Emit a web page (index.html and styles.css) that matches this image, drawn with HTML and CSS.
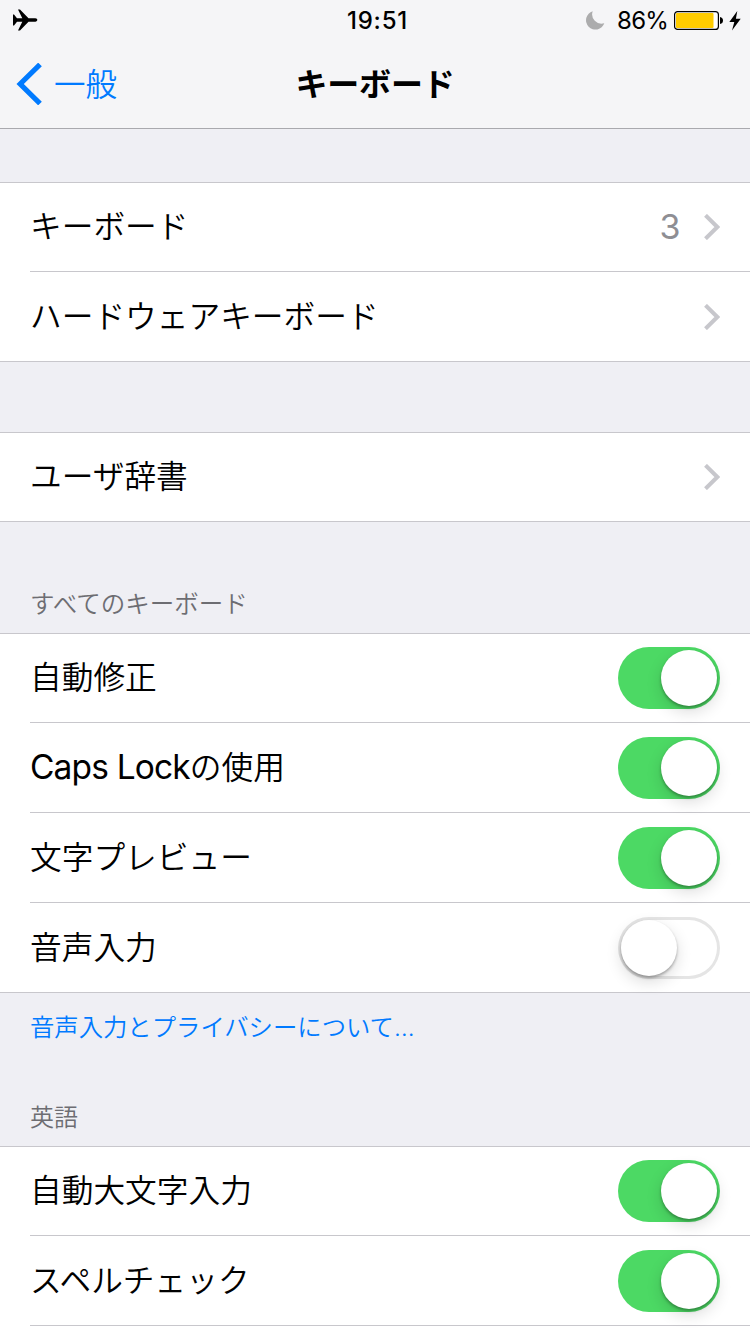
FILE: index.html
```html
<!DOCTYPE html>
<html lang="ja">
<head>
<meta charset="utf-8">
<title>キーボード</title>
<link rel="stylesheet" href="styles.css">
</head>
<body>
<div class="screen">
  <header class="header">
    <div class="status">
      <svg class="plane" width="25" height="24" viewBox="0 0 25 24"><path d="M0 6.500h1l3 3.800h5.300L5 1.500h2L15.500 10.300h6.800c2.700 0 2.700 3.400 0 3.400h-6.800L7 22.500H5l4.300-8.800H4l-3 3.800H0z"/></svg>
      <span class="time">19:51</span>
      <div class="status-right">
        <svg class="moon" width="19" height="19" viewBox="0 0 19 19"><path d="M6.700.2A9.400 9.400 0 1 0 18.300 12.300A9.400 9.400 0 0 1 6.700.2z" fill="#acacad"/></svg>
        <span class="percent">86%</span>
        <svg class="battery" width="50" height="20" viewBox="0 0 50 20"><rect x=".6" y=".6" width="43.800" height="17.800" rx="3" fill="#fff" stroke="#000" stroke-width="1.200"/><rect x="2" y="2" width="37.500" height="15" rx="1" fill="#fc0"/><path d="M46 6q3 .5 3 3.500t-3 3.500z"/></svg>
        <svg class="bolt" width="12" height="20" viewBox="0 0 12 20"><path d="M8.300 0L.3 11h5L3 19.500 11.700 7.800H6.900z"/></svg>
      </div>
    </div>
    <nav class="nav">
      <a class="back"><svg width="26" height="42" viewBox="0 0 26 42"><path d="M24 1.500L4.200 21 24 40.500" fill="none" stroke="#007aff" stroke-width="5.200"/></svg><span class="back-label">一般</span></a>
      <h1 class="title">キーボード</h1>
    </nav>
  </header>

  <section class="group group-first">
    <div class="row"><span class="label">キーボード</span><span class="value">3</span><svg class="chevron" width="16" height="26" viewBox="0 0 16 26"><path d="M1.500 1.300L13.300 13 1.500 24.700"/></svg></div>
    <div class="row"><span class="label">ハードウェアキーボード</span><svg class="chevron" width="16" height="26" viewBox="0 0 16 26"><path d="M1.500 1.300L13.300 13 1.500 24.700"/></svg></div>
  </section>

  <section class="group group-dictionary">
    <div class="row"><span class="label">ユーザ辞書</span><svg class="chevron" width="16" height="26" viewBox="0 0 16 26"><path d="M1.500 1.300L13.300 13 1.500 24.700"/></svg></div>
  </section>

  <h2 class="caption caption-all">すべてのキーボード</h2>
  <section class="group">
    <div class="row"><span class="label">自動修正</span><span class="toggle on"></span></div>
    <div class="row"><span class="label label-mixed"><span class="latin">Caps Lock</span>の使用</span><span class="toggle on"></span></div>
    <div class="row"><span class="label">文字プレビュー</span><span class="toggle on"></span></div>
    <div class="row"><span class="label">音声入力</span><span class="toggle"></span></div>
  </section>
  <a class="privacy">音声入力とプライバシーについて…</a>

  <h2 class="caption caption-english">英語</h2>
  <section class="group">
    <div class="row"><span class="label">自動大文字入力</span><span class="toggle on"></span></div>
    <div class="row"><span class="label">スペルチェック</span><span class="toggle on"></span></div>
    <div class="row"></div>
  </section>
</div>
</body>
</html>
```
FILE: styles.css
```css
* { box-sizing: border-box; }
body { margin: 0; overflow: hidden; }
svg { display: block; flex: none; }

.screen {
  width: 750px;
  height: 1334px;
  overflow: hidden;
  background: #efeff4;
  color: #000;
  font-family: Inter, "Noto Sans CJK JP", sans-serif;
}

.header {
  height: 129px;
  background: #f5f5f7;
  border-bottom: 1px solid #a9a9ae;
}
.status {
  display: grid;
  grid-template-columns: 1fr auto 1fr;
  align-items: center;
  height: 40px;
  padding: 0 10px 0 13px;
}
.plane { margin-bottom: 1px; }
.time {
  font-size: 24px;
  font-weight: 500;
  line-height: 40px;
  letter-spacing: 0.8px;
  padding: 1px 0 0 2px;
}
.status-right { display: flex; justify-content: flex-end; align-items: center; height: 40px; }
.moon { margin-right: 12px; }
.percent { font-size: 24px; line-height: 40px; padding-top: 1px; letter-spacing: -0.8px; }
.battery { margin: 1px 5px 0 6px; }
.bolt { margin-right: -1px; }

.nav {
  display: grid;
  grid-template-columns: 1fr auto 1fr;
  align-items: center;
  height: 88px;
}
.back {
  display: flex;
  align-items: center;
  gap: 12px;
  padding-left: 16px;
  color: #007aff;
  font-size: 31.500px;
  font-weight: 350;
  line-height: 46px;
}
.back-label { padding-top: 2px; }
.title { margin: 0; padding-top: 1px; font-size: 32px; font-weight: 700; line-height: 46px; letter-spacing: -0.2px; }

.group {
  background: #fff;
  border-top: 1px solid #c8c7cc;
  border-bottom: 1px solid #c8c7cc;
}
.group-first { margin-top: 53px; }
.group-dictionary { margin-top: 70px; }

.row {
  display: flex;
  align-items: center;
  height: 88px;
  margin-left: 30px;
  padding-right: 30px;
}
.row + .row {
  height: 90px;
  padding-top: 1px;
  border-top: 1px solid #c8c7cc;
}
.label {
  flex: 1;
  font-size: 31.700px;
  font-weight: 350;
  line-height: 46px;
}
.label-mixed { padding-bottom: 2px; }
.latin { font-size: 33.500px; font-weight: 400; letter-spacing: -0.850px; }
.value { margin-right: 24px; color: #8e8e93; font-size: 34px; font-weight: 400; line-height: 46px; letter-spacing: -0.5px; }
.chevron { fill: none; stroke: #c7c7cc; stroke-width: 4; }

.toggle {
  display: flex;
  width: 102px;
  height: 62px;
  padding: 3px;
  border-radius: 31px;
  box-shadow: inset 0 0 0 3px #e5e5e5;
}
.toggle.on {
  justify-content: flex-end;
  background: #4cd964;
  box-shadow: none;
}
.toggle::before {
  content: "";
  width: 56px;
  height: 56px;
  border-radius: 50%;
  background: #fff;
  box-shadow: 0 2px 3px rgba(0, 0, 0, 0.300), 0 6px 16px rgba(0, 0, 0, 0.140);
}

.caption {
  margin: 0;
  padding-left: 30px;
  color: #6d6d72;
  font-size: 24.500px;
  font-weight: 350;
  line-height: 36px;
}
.caption-all { padding-top: 64px; height: 111px; }
.caption-english { padding-top: 53px; height: 99px; font-size: 24px; }
.privacy {
  display: block;
  height: 54px;
  padding: 16px 0 0 30px;
  color: #007aff;
  font-size: 24.350px;
  font-weight: 350;
  line-height: 36px;
}
```
